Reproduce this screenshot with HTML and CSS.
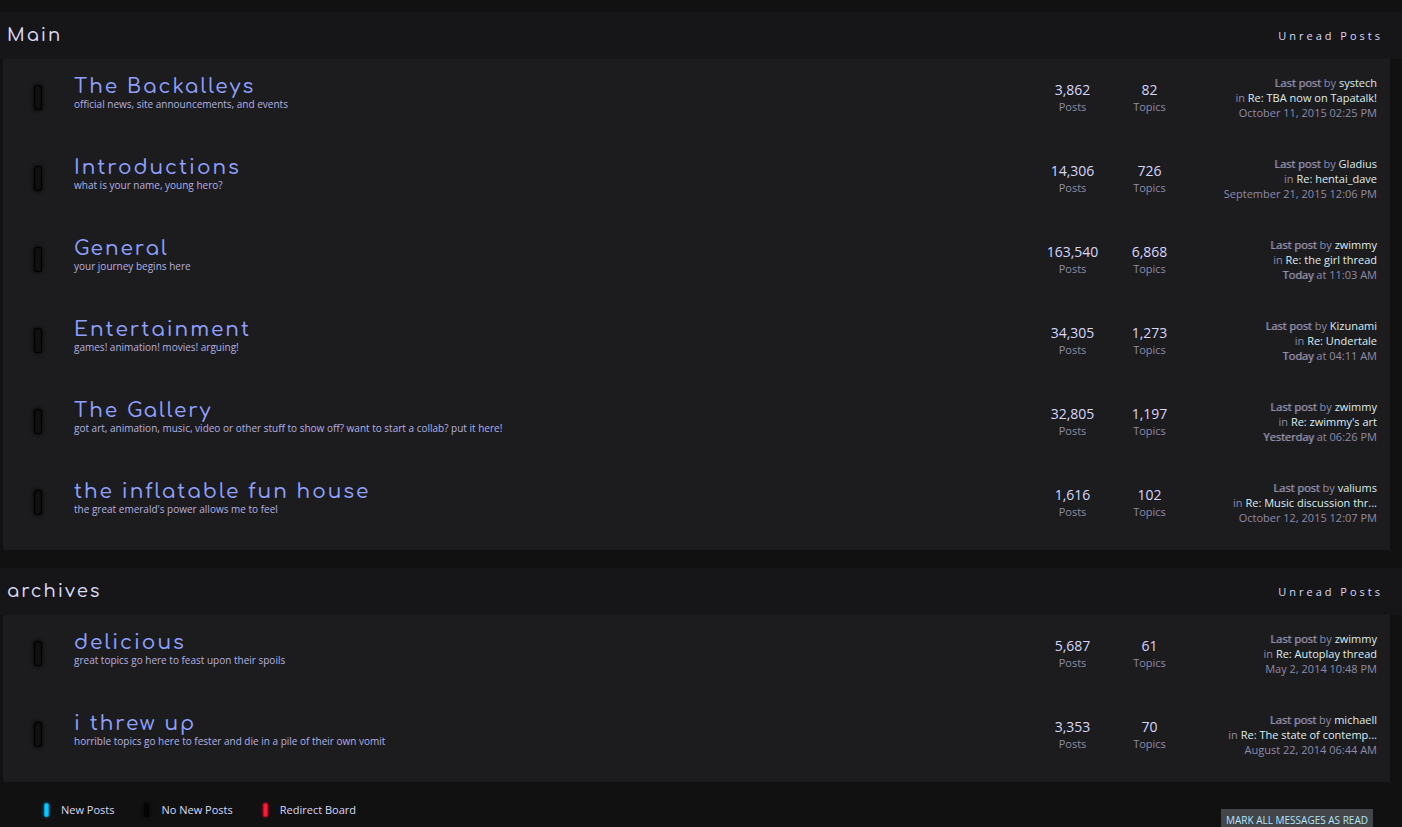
FILE: index.html
```html
<!DOCTYPE html>
<html lang="en">
<head>
  <meta charset="UTF-8" />
  <meta name="viewport" content="width=device-width, initial-scale=1.0"/>
  <title>Board Index</title>
  <link rel="stylesheet" href="styles.css">
</head>
<body>
  <main>
    <section class="category">
      <div class="cat-bar">
        <h2>Main</h2>
        <a href="#" class="unread">Unread Posts</a>
      </div>
      <table class="boards" aria-label="Main">
        <tr>
          <td class="icon"><span class="light"></span></td>
          <td class="info"><h3><a href="#">The Backalleys</a></h3><p>official news, site announcements, and events</p></td>
          <td class="stats"><b>3,862</b>Posts</td>
          <td class="stats"><b>82</b>Topics</td>
          <td class="lastpost"><strong>Last post</strong> by <a href="#">systech</a><br>in <a href="#">Re: TBA now on Tapatalk!</a><br>October 11, 2015 02:25 PM</td>
        </tr>
        <tr>
          <td class="icon"><span class="light"></span></td>
          <td class="info"><h3><a href="#">Introductions</a></h3><p>what is your name, young hero?</p></td>
          <td class="stats"><b>14,306</b>Posts</td>
          <td class="stats"><b>726</b>Topics</td>
          <td class="lastpost"><strong>Last post</strong> by <a href="#">Gladius</a><br>in <a href="#">Re: hentai_dave</a><br>September 21, 2015 12:06 PM</td>
        </tr>
        <tr>
          <td class="icon"><span class="light"></span></td>
          <td class="info"><h3><a href="#">General</a></h3><p>your journey begins here</p></td>
          <td class="stats"><b>163,540</b>Posts</td>
          <td class="stats"><b>6,868</b>Topics</td>
          <td class="lastpost"><strong>Last post</strong> by <a href="#">zwimmy</a><br>in <a href="#">Re: the girl thread</a><br><strong>Today</strong> at 11:03 AM</td>
        </tr>
        <tr>
          <td class="icon"><span class="light"></span></td>
          <td class="info"><h3><a href="#">Entertainment</a></h3><p>games! animation! movies! arguing!</p></td>
          <td class="stats"><b>34,305</b>Posts</td>
          <td class="stats"><b>1,273</b>Topics</td>
          <td class="lastpost"><strong>Last post</strong> by <a href="#">Kizunami</a><br>in <a href="#">Re: Undertale</a><br><strong>Today</strong> at 04:11 AM</td>
        </tr>
        <tr>
          <td class="icon"><span class="light"></span></td>
          <td class="info"><h3><a href="#">The Gallery</a></h3><p>got art, animation, music, video or other stuff to show off? want to start a collab? put it here!</p></td>
          <td class="stats"><b>32,805</b>Posts</td>
          <td class="stats"><b>1,197</b>Topics</td>
          <td class="lastpost"><strong>Last post</strong> by <a href="#">zwimmy</a><br>in <a href="#">Re: zwimmy's art</a><br><strong>Yesterday</strong> at 06:26 PM</td>
        </tr>
        <tr>
          <td class="icon"><span class="light"></span></td>
          <td class="info"><h3><a href="#">the inflatable fun house</a></h3><p>the great emerald's power allows me to feel</p></td>
          <td class="stats"><b>1,616</b>Posts</td>
          <td class="stats"><b>102</b>Topics</td>
          <td class="lastpost"><strong>Last post</strong> by <a href="#">valiums</a><br>in <a href="#">Re: Music discussion thr...</a><br>October 12, 2015 12:07 PM</td>
        </tr>
      </table>
    </section>

    <section class="category">
      <div class="cat-bar">
        <h2>archives</h2>
        <a href="#" class="unread">Unread Posts</a>
      </div>
      <table class="boards" aria-label="archives">
        <tr>
          <td class="icon"><span class="light"></span></td>
          <td class="info"><h3><a href="#">delicious</a></h3><p>great topics go here to feast upon their spoils</p></td>
          <td class="stats"><b>5,687</b>Posts</td>
          <td class="stats"><b>61</b>Topics</td>
          <td class="lastpost"><strong>Last post</strong> by <a href="#">zwimmy</a><br>in <a href="#">Re: Autoplay thread</a><br>May 2, 2014 10:48 PM</td>
        </tr>
        <tr>
          <td class="icon"><span class="light"></span></td>
          <td class="info"><h3><a href="#">i threw up</a></h3><p>horrible topics go here to fester and die in a pile of their own vomit</p></td>
          <td class="stats"><b>3,353</b>Posts</td>
          <td class="stats"><b>70</b>Topics</td>
          <td class="lastpost"><strong>Last post</strong> by <a href="#">michaell</a><br>in <a href="#">Re: The state of contemp...</a><br>August 22, 2014 06:44 AM</td>
        </tr>
      </table>
    </section>
  </main>

  <footer class="board-footer">
    <ul class="legend">
      <li><span class="light small new"></span>New Posts</li>
      <li><span class="light small"></span>No New Posts</li>
      <li><span class="light small redirect"></span>Redirect Board</li>
    </ul>
    <button type="button" class="mark-read">MARK ALL MESSAGES AS READ</button>
  </footer>
</body>
</html>
```
FILE: styles.css
```css
* {
  box-sizing: border-box;
}
body {
  margin: 0;
  padding-top: 12px;
  background-color: #111;
  color: #8d8bab;
  font-family: "Open Sans", sans-serif;
  font-size: 11px;
  line-height: 15px;
  overflow: hidden;
}
a {
  text-decoration: none;
}
.category {
  margin-bottom: 18px;
}
.cat-bar {
  display: flex;
  justify-content: space-between;
  align-items: center;
  height: 47px;
  padding: 0 19px 0 7px;
  background-color: #161618;
}
.cat-bar h2 {
  margin: 0;
  color: #dcdcfa;
  font-family: Comfortaa, Quicksand, Lato, sans-serif;
  font-size: 18px;
  font-weight: 500;
  letter-spacing: 2px;
}
.unread {
  color: #d8d8fa;
  letter-spacing: 3px;
}

/* boards */
.boards {
  width: calc(100% - 15px);
  margin-left: 3px;
  padding-bottom: 5px;
  border-spacing: 0;
  table-layout: fixed;
  background-color: #1c1c1e;
}
.boards td {
  height: 81px;
  padding: 0;
  vertical-align: top;
}
.boards .icon {
  width: 71px;
  padding: 26px 0 0 31px;
}
.boards .info {
  padding-top: 16px;
}
.info h3 {
  margin: 0;
  font-family: Comfortaa, Quicksand, Lato, sans-serif;
  font-size: 20px;
  font-weight: 500;
  line-height: 24px;
  letter-spacing: 2px;
}
.info h3 a {
  color: #8fa0ff;
}
.info p {
  margin: 0;
  color: #b3b1e2;
  font-size: 10px;
  line-height: 10px;
}
.boards .stats {
  width: 77px;
  padding-top: 22px;
  text-align: center;
}
.stats b {
  display: block;
  color: #d6d6fc;
  font-size: 14px;
  font-weight: 400;
  line-height: 18px;
}
.boards .lastpost {
  width: 202px;
  padding: 16px 13px 0 0;
  text-align: right;
  white-space: nowrap;
}
.lastpost a {
  color: #dcedf0;
}
.lastpost strong {
  color: #9a98b4;
  font-weight: 400;
  text-shadow: 1px 0 #5c5a70;
}

/* status lights */
.light {
  display: block;
  width: 8px;
  height: 25px;
  border: 1px solid #030303;
  border-radius: 2px;
  background-color: #111112;
  box-shadow: 0 0 4px #000, inset 0 0 2px #000;
}
.light.small {
  width: 5px;
  height: 14px;
  background-color: #060606;
}
.light.new {
  border-color: #069bd0;
  background-color: #08c8ff;
  box-shadow: 0 0 3px #0789b8;
}
.light.redirect {
  border-color: #c80d24;
  background-color: #ff1b35;
  box-shadow: 0 0 3px #c80d24;
}

/* footer */
.board-footer {
  display: flex;
  justify-content: space-between;
  align-items: flex-start;
  margin-top: -18px;
  padding: 20px 29px 0 44px;
}
.legend {
  display: flex;
  gap: 30px;
  margin: 0;
  padding: 0;
  list-style: none;
  color: #d8d8fa;
}
.legend li {
  display: flex;
  align-items: center;
  gap: 12px;
}
.mark-read {
  margin-top: 7px;
  padding: 4px 5px;
  border: none;
  background-color: #444549;
  color: #b2e6fc;
  font-family: inherit;
  font-size: 10px;
  line-height: 15px;
  cursor: pointer;
}
```
